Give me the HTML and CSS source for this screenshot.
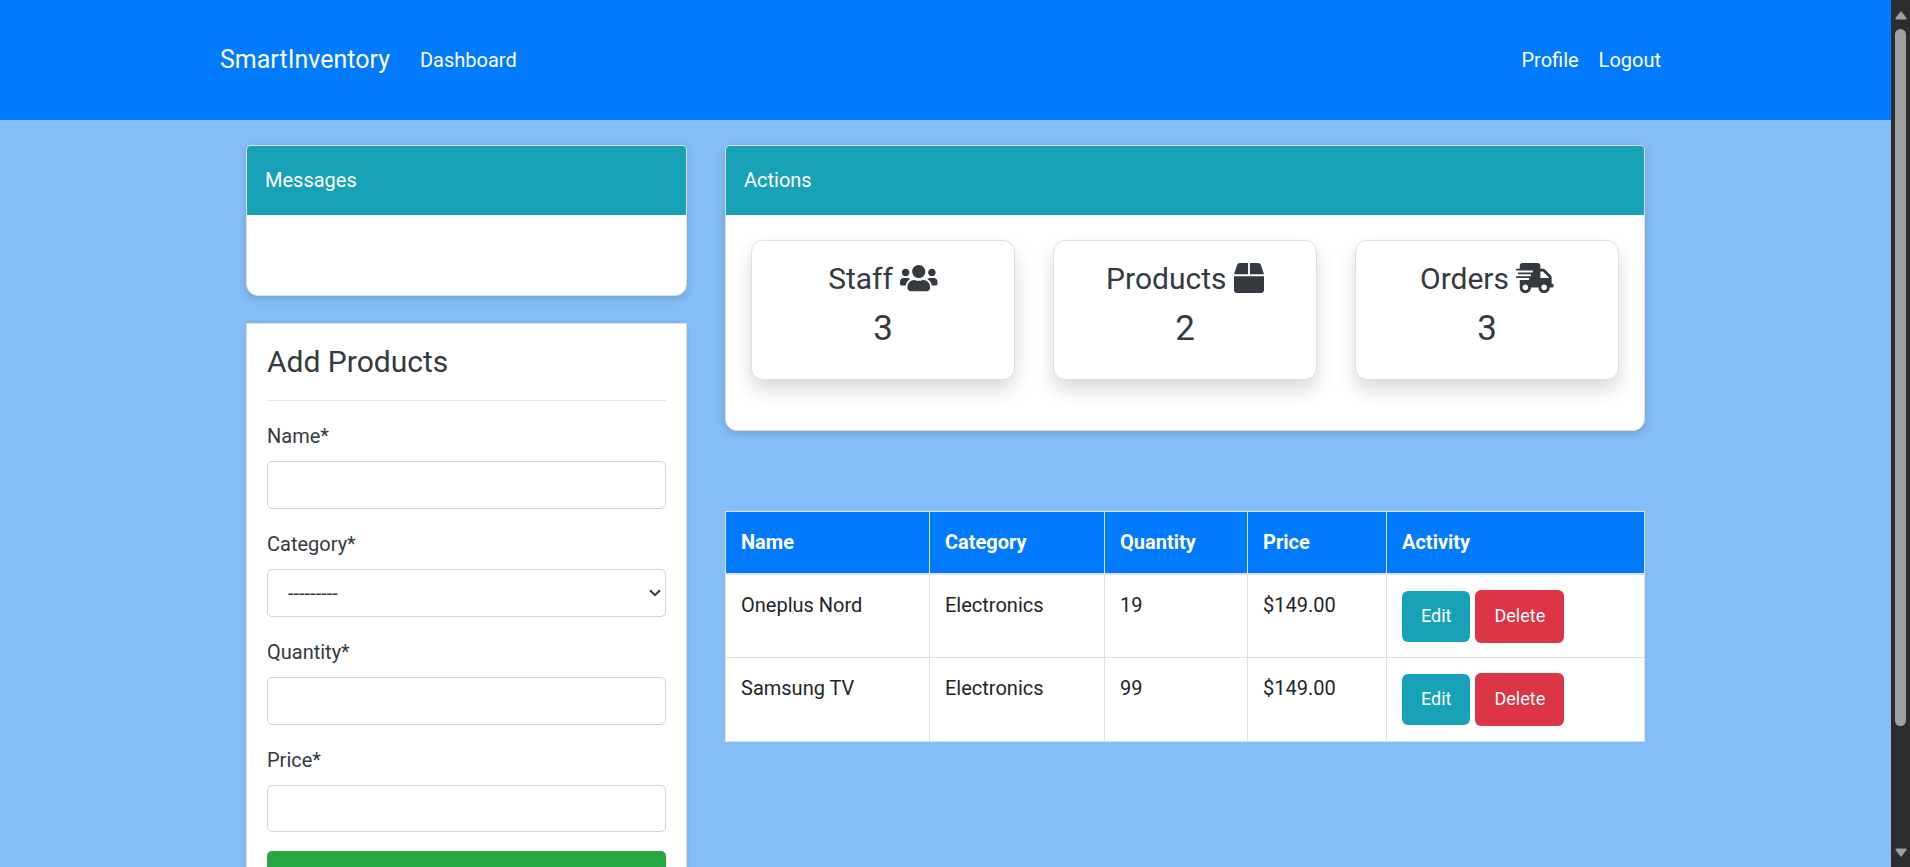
FILE: index.html
```html
<!DOCTYPE html>
<html lang="en">
<head>
<meta charset="utf-8">
<title>SmartInventory</title>
<link rel="stylesheet" href="styles.css">
</head>
<body>
<div class="page">
  <nav class="navbar">
    <a class="brand">SmartInventory</a>
    <a class="nav-link">Dashboard</a>
    <div class="nav-right">
      <a class="nav-link">Profile</a>
      <a class="nav-link">Logout</a>
    </div>
  </nav>
  <main class="columns">
    <div class="side">
      <section class="card messages">
        <div class="card-header">Messages</div>
      </section>
      <section class="form-card">
        <h4 class="form-title">Add Products</h4>
        <div class="field"><label>Name*</label><div class="control"></div></div>
        <div class="field"><label>Category*</label><div class="control select"><span>---------</span>
          <svg class="chevron" viewBox="0 0 12 8"><path d="M1 1.2l5 5 5-5" fill="none" stroke="#343a40" stroke-width="2"/></svg></div></div>
        <div class="field"><label>Quantity*</label><div class="control"></div></div>
        <div class="field"><label>Price*</label><div class="control short"></div></div>
        <div class="submit"></div>
      </section>
    </div>
    <div class="content">
      <section class="card actions">
        <div class="card-header">Actions</div>
        <div class="stats">
          <div class="stat">
            <h4>Staff <svg class="icon wide" viewBox="0 0 640 512"><path d="M96 224c35.3 0 64-28.7 64-64s-28.7-64-64-64-64 28.7-64 64 28.7 64 64 64zm448 0c35.3 0 64-28.7 64-64s-28.7-64-64-64-64 28.7-64 64 28.7 64 64 64zm32 32h-64c-17.6 0-33.5 7.1-45.1 18.6 40.3 22.1 68.9 62 75.1 109.4h66c17.7 0 32-14.3 32-32v-32c0-35.3-28.7-64-64-64zm-256 0c61.9 0 112-50.1 112-112S381.9 32 320 32 208 82.1 208 144s50.1 112 112 112zm76.8 32h-8.3c-20.8 10-43.9 16-68.5 16s-47.6-6-68.5-16h-8.3C179.6 288 128 339.6 128 403.2V432c0 26.5 21.5 48 48 48h288c26.5 0 48-21.5 48-48v-28.8c0-63.6-51.6-115.2-115.2-115.2zm-223.7-13.4C161.5 263.1 145.6 256 128 256H64c-35.3 0-64 28.7-64 64v32c0 17.7 14.3 32 32 32h65.9c6.3-47.4 34.9-87.3 75.2-109.4z"/></svg></h4>
            <p>3</p>
          </div>
          <div class="stat">
            <h4>Products <svg class="icon" viewBox="0 0 512 512"><path d="M509.500 184.600L458.900 32.800C452.400 13.200 434.100 0 413.400 0H272v192h238.700c-.4-2.500-.4-5-1.200-7.400zM240 0H98.600c-20.700 0-39 13.200-45.500 32.800L2.500 184.600c-.8 2.400-.8 4.900-1.200 7.400H240V0zM0 224v240c0 26.500 21.500 48 48 48h416c26.500 0 48-21.500 48-48V224H0z"/></svg></h4>
            <p>2</p>
          </div>
          <div class="stat">
            <h4>Orders <svg class="icon wide" viewBox="0 0 640 512"><path d="M624 352h-16V243.900c0-12.700-5.100-24.900-14.100-33.900L494 110.100c-9-9-21.200-14.100-33.900-14.100H416V48c0-26.500-21.500-48-48-48H112C85.500 0 64 21.500 64 48v48H8c-4.400 0-8 3.600-8 8v16c0 4.400 3.600 8 8 8h272c4.400 0 8 3.600 8 8v16c0 4.400-3.600 8-8 8H40c-4.400 0-8 3.600-8 8v16c0 4.400 3.600 8 8 8h208c4.400 0 8 3.600 8 8v16c0 4.400-3.600 8-8 8H8c-4.400 0-8 3.600-8 8v16c0 4.400 3.600 8 8 8h208c4.400 0 8 3.600 8 8v16c0 4.400-3.600 8-8 8H64v128c0 53 43 96 96 96s96-43 96-96h128c0 53 43 96 96 96s96-43 96-96h48c8.800 0 16-7.200 16-16v-32c0-8.800-7.200-16-16-16zM160 464c-26.500 0-48-21.500-48-48s21.500-48 48-48 48 21.500 48 48-21.500 48-48 48zm320 0c-26.500 0-48-21.500-48-48s21.500-48 48-48 48 21.500 48 48-21.500 48-48 48zm80-208H416V144h44.100l99.900 99.900V256z"/></svg></h4>
            <p>3</p>
          </div>
        </div>
      </section>
      <table class="products">
        <colgroup><col class="c-name"><col class="c-cat"><col class="c-qty"><col class="c-price"><col class="c-act"></colgroup>
        <thead><tr><th>Name</th><th>Category</th><th>Quantity</th><th>Price</th><th>Activity</th></tr></thead>
        <tbody>
          <tr><td>Oneplus Nord</td><td>Electronics</td><td>19</td><td>$149.00</td><td><div class="buttons"><a class="btn edit">Edit</a><a class="btn delete">Delete</a></div></td></tr>
          <tr><td>Samsung TV</td><td>Electronics</td><td>99</td><td>$149.00</td><td><div class="buttons"><a class="btn edit">Edit</a><a class="btn delete">Delete</a></div></td></tr>
        </tbody>
      </table>
    </div>
  </main>
</div>
<div class="scrollbar">
  <svg class="arrow" viewBox="0 0 12 9"><path d="M6 0.500L11.500 7.500Q12 9 10.500 9H1.500Q0 9 .5 7.500Z"/></svg>
  <div class="thumb"></div>
  <svg class="arrow down" viewBox="0 0 12 9"><path d="M6 0.500L11.500 7.500Q12 9 10.500 9H1.500Q0 9 .5 7.500Z"/></svg>
</div>
</body>
</html>
```
FILE: styles.css
```css
* { box-sizing: border-box; }

body {
  margin: 0;
  height: 867px;
  overflow: hidden;
  display: flex;
  font: 20px/30px Roboto, sans-serif;
  color: #343a40;
  background: #84bdf7;
}

.page { width: 1891px; height: 867px; overflow: hidden; }

.navbar {
  display: flex;
  align-items: center;
  height: 120px;
  padding: 0 230px 0 220px;
  color: #fff;
  background: #007bff;
}
.brand { font-size: 25px; margin-right: 30px; }
.nav-right { display: flex; gap: 20px; margin-left: auto; }

.columns {
  display: flex;
  align-items: flex-start;
  gap: 38px;
  padding: 25px 246px 0;
}
.side { width: 441px; }
.content { width: 920px; }

.card {
  border: 1px solid #dfdfdf;
  border-radius: 5px 5px 12px 12px;
  background: #fff;
  box-shadow: 0 3px 8px rgba(0, 0, 0, .15);
  overflow: hidden;
}
.card-header {
  height: 69px;
  padding: 19px 18px 0;
  color: #fff;
  background: #17a2b8;
}
.messages { height: 151px; }

.form-card {
  height: 640px;
  margin-top: 27px;
  padding: 20px;
  border: 1px solid #dfdfdf;
  background: #fff;
  box-shadow: 0 0 5px rgba(0, 0, 0, .06);
}
.form-title {
  margin: 0 0 20px;
  height: 57px;
  border-bottom: 1px solid #e5e5e5;
  font-size: 30px;
  font-weight: 400;
  line-height: 36px;
}
.field { height: 108px; }
.field label { display: block; height: 40px; }
.control {
  height: 48px;
  border: 1px solid #ced4da;
  border-radius: 5px;
  background: #fff;
}
.short { height: 47px; }
.select {
  display: flex;
  align-items: center;
  justify-content: space-between;
  padding: 0 4px 0 20px;
  font-size: 20px;
}
.chevron { width: 12px; height: 8px; }
.submit { height: 50px; margin-top: -2px; border-radius: 5px; background: #28a745; }

.actions { height: 286px; }
.stats { display: flex; gap: 38px; padding: 25px 25px 0; }
.stat {
  flex: 1;
  height: 140px;
  padding-top: 18px;
  border: 1px solid #dfdfdf;
  border-radius: 12px;
  background: #fff;
  box-shadow: 0 10px 20px rgba(0, 0, 0, .15);
  text-align: center;
}
.stat h4 { margin: 0; font-size: 30px; font-weight: 400; line-height: 40px; white-space: nowrap; }
.stat p { margin: 9px 0 0; font-size: 35px; line-height: 42px; }
.icon { width: 30px; height: 30px; vertical-align: -4px; fill: #343a40; }
.wide { width: 37.5px; }

.products {
  width: 920px;
  margin-top: 80px;
  border-collapse: collapse;
  table-layout: fixed;
  background: #fff;
  color: #212529;
}
.c-name { width: 204px; }
.c-cat { width: 175px; }
.c-qty { width: 143px; }
.c-price { width: 139px; }
.products th, .products td {
  border: 1px solid #dee2e6;
  padding: 15px;
  text-align: left;
  vertical-align: top;
}
.products th { height: 62px; color: #fff; background: #007bff; border-bottom-width: 2px; }
.products td { height: 84px; padding-bottom: 0; }
.buttons { display: flex; gap: 5px; align-items: center; }
.btn {
  border-radius: 6px;
  padding: 0 19px;
  font-size: 18px;
  color: #fff;
}
.edit { height: 51px; line-height: 50px; background: #17a2b8; }
.delete { height: 53px; line-height: 52px; background: #dc3545; }

.scrollbar {
  display: flex;
  flex-direction: column;
  align-items: center;
  width: 19px;
  height: 867px;
  padding: 10px 0 9px;
  background: #2c2c2c;
}
.arrow { width: 12px; height: 10px; fill: #9f9f9f; }
.down { margin-top: auto; transform: rotate(180deg); }
.thumb { width: 11px; height: 697px; margin-top: 9px; border-radius: 6px; background: #9f9f9f; }
```
